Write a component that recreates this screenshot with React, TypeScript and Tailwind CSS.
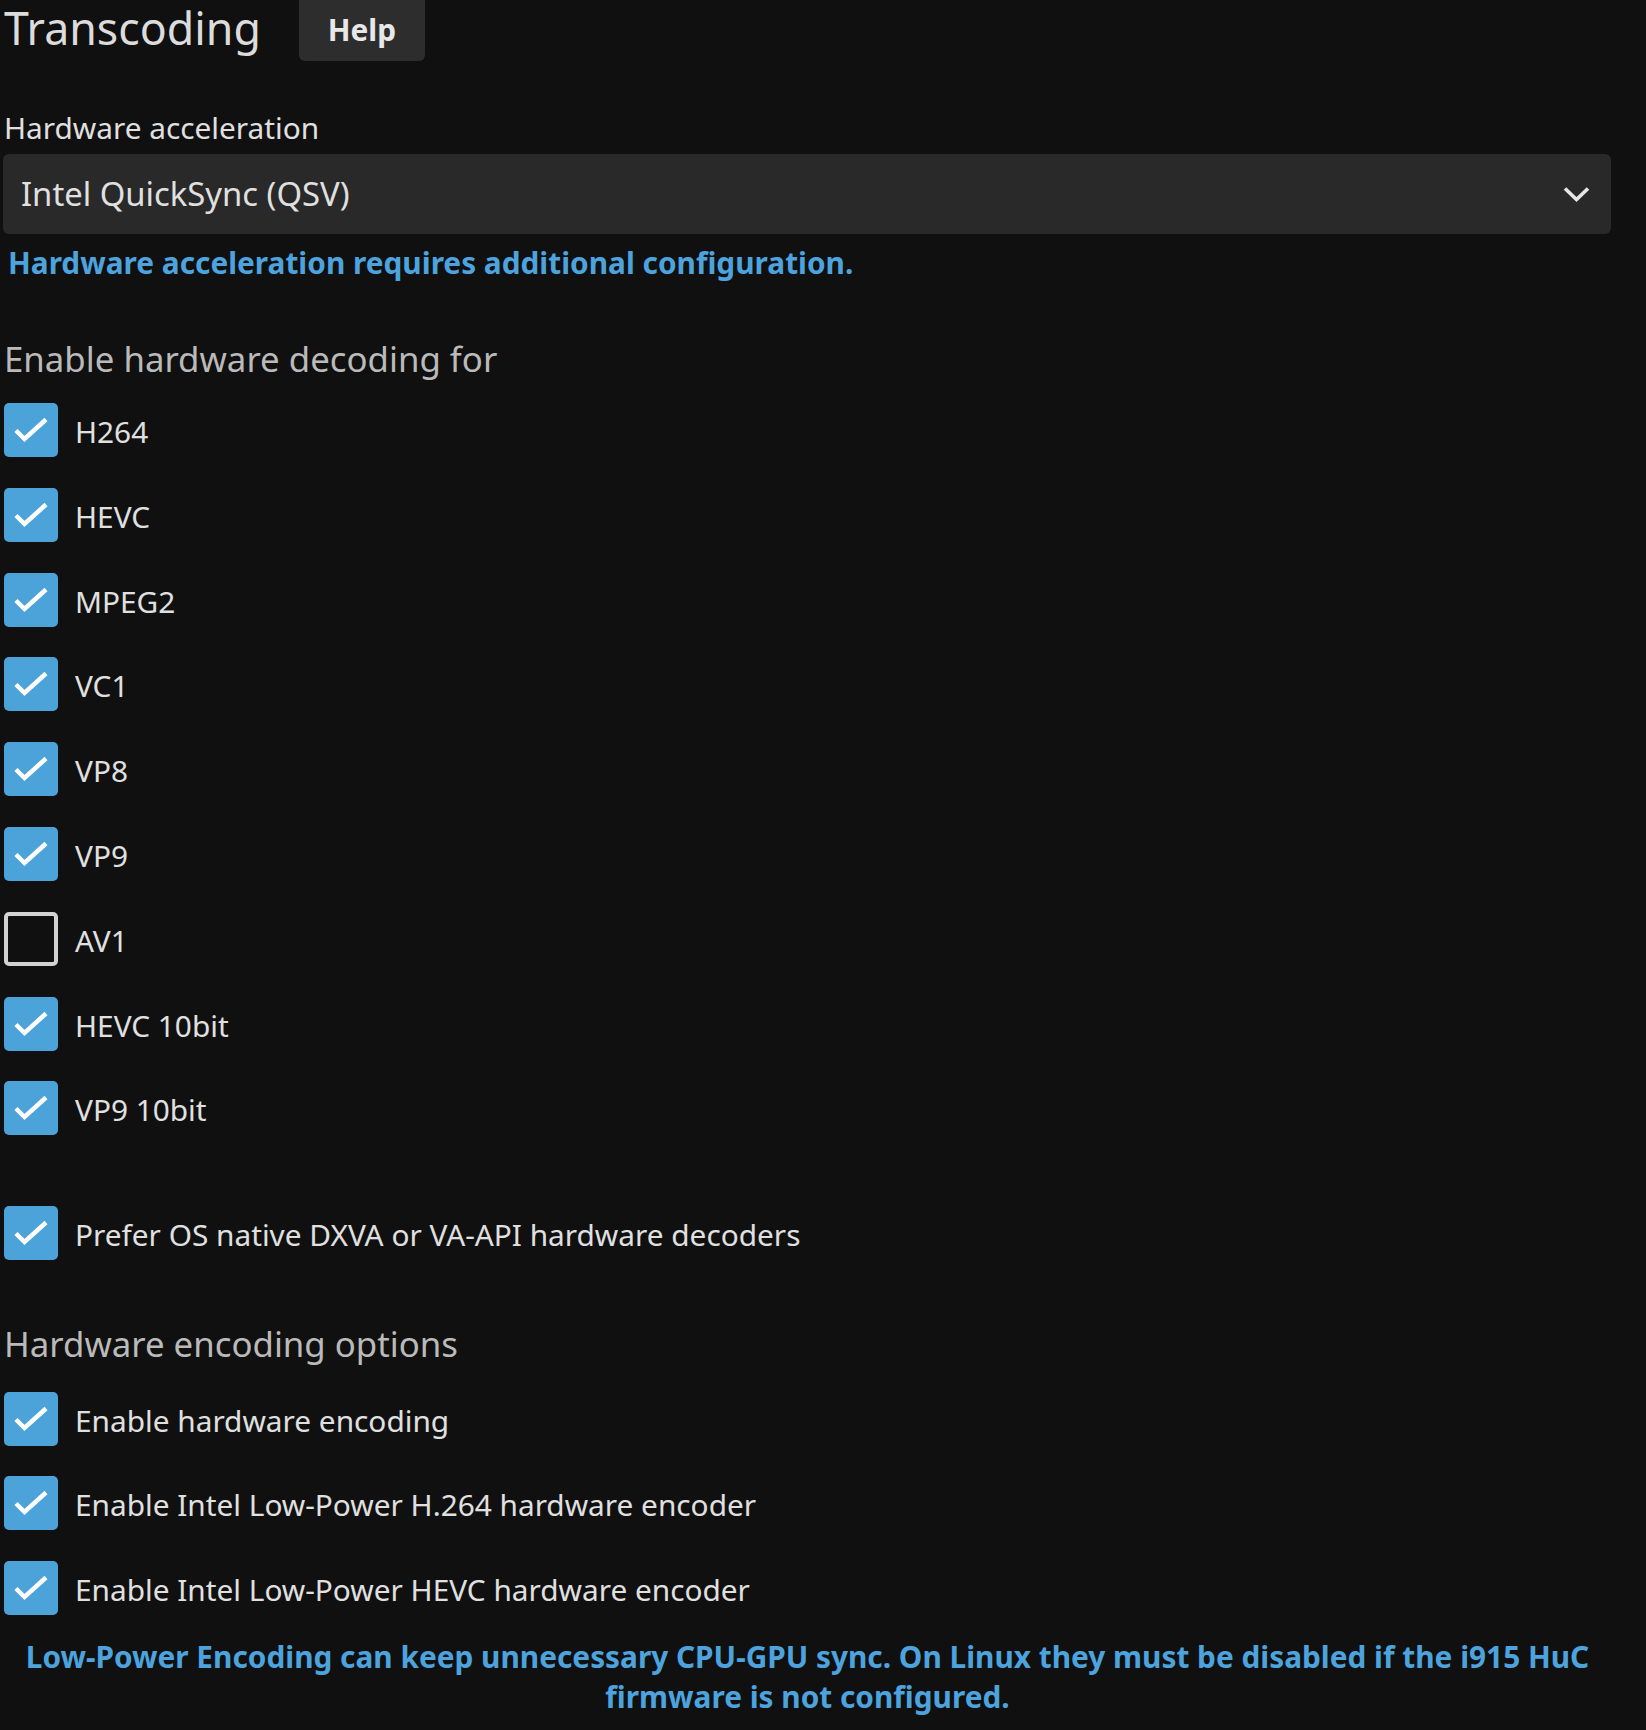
import React from "react";

function Check({ checked }: { checked: boolean }) {
  if (!checked) {
    return (
      <div className="w-[54px] h-[54px] shrink-0 rounded-[5px] border-[4px] border-[#d2d2d2]" />
    );
  }
  return (
    <div className="w-[54px] h-[54px] shrink-0 rounded-[5px] bg-[#4ca3da]">
      <svg width="54" height="54" viewBox="0 0 54 54">
        <polyline
          points="12,27.5 20.5,36 42,16.5"
          fill="none"
          stroke="#ffffff"
          strokeWidth="4.5"
          strokeLinecap="butt"
          strokeLinejoin="miter"
        />
      </svg>
    </div>
  );
}

function Row({ label, checked = true }: { label: string; checked?: boolean }) {
  return (
    <div className="flex items-center h-[54px]">
      <Check checked={checked} />
      <span className="ml-[17px] mt-[4px] text-[29.8px] leading-[30px] text-[#e0e0e0]">{label}</span>
    </div>
  );
}

export default function App() {
  const decoders: [string, boolean][] = [
    ["H264", true],
    ["HEVC", true],
    ["MPEG2", true],
    ["VC1", true],
    ["VP8", true],
    ["VP9", true],
    ["AV1", false],
    ["HEVC 10bit", true],
    ["VP9 10bit", true],
  ];
  return (
    <div className="min-h-[1730px] w-full bg-[#101010] font-['Noto_Sans',sans-serif] text-[#e0e0e0] overflow-hidden">
      <div className="w-[1611px] pl-[4px]">
        {/* Header */}
        <div className="flex items-start h-[61px]">
          <div className="mt-[6px] h-[44px] text-[44.7px] leading-[44px] text-[#dcdcdc]">Transcoding</div>
          <div className="ml-[38px] w-[126px] h-[61px] rounded-b-[6px] bg-[#2d2d2d] flex items-center justify-center text-[29.8px] font-bold text-[#e8e8e8]">
            Help
          </div>
        </div>

        {/* Hardware acceleration */}
        <div className="mt-[52px] h-[29px] text-[29.8px] leading-[29px] text-[#e0e0e0]">Hardware acceleration</div>
        <div className="mt-[12px] -ml-[1px] h-[80px] rounded-[6px] bg-[#292929] flex items-center justify-between pl-[18px] pr-[21px]">
          <span className="text-[32.8px] leading-[32px] text-[#e0e0e0]">Intel QuickSync (QSV)</span>
          <svg width="27" height="17" viewBox="0 0 27 17">
            <polyline points="2,2.5 13.5,13.5 25,2.5" fill="none" stroke="#e6e6e6" strokeWidth="3.6" />
          </svg>
        </div>
        <div className="mt-[14px] h-[29px] pl-[4px] text-[29.8px] leading-[29px] font-bold text-[#4ca3dd]">
          Hardware acceleration requires additional configuration.
        </div>

        {/* Decoding */}
        <div className="mt-[64px] h-[35px] text-[34.8px] leading-[35px] text-[#bababa]">Enable hardware decoding for</div>
        <div className="mt-[27px] flex flex-col gap-[30.8px]">
          {decoders.map(([l, c]) => (
            <Row key={l} label={l} checked={c} />
          ))}
        </div>

        <div className="mt-[70.6px]">
          <Row label="Prefer OS native DXVA or VA-API hardware decoders" />
        </div>

        {/* Encoding */}
        <div className="mt-[66.5px] h-[35px] text-[34.8px] leading-[35px] text-[#bababa]">Hardware encoding options</div>
        <div className="mt-[30.5px] flex flex-col gap-[30.5px]">
          <Row label="Enable hardware encoding" />
          <Row label="Enable Intel Low-Power H.264 hardware encoder" />
          <Row label="Enable Intel Low-Power HEVC hardware encoder" />
        </div>

        <div className="mt-[22px] text-center text-[29.8px] leading-[40px] font-bold text-[#4ca3dd] px-[10px]">
          Low-Power Encoding can keep unnecessary CPU-GPU sync. On Linux they must be disabled if the i915 HuC firmware is not configured.
        </div>
      </div>
    </div>
  );
}
